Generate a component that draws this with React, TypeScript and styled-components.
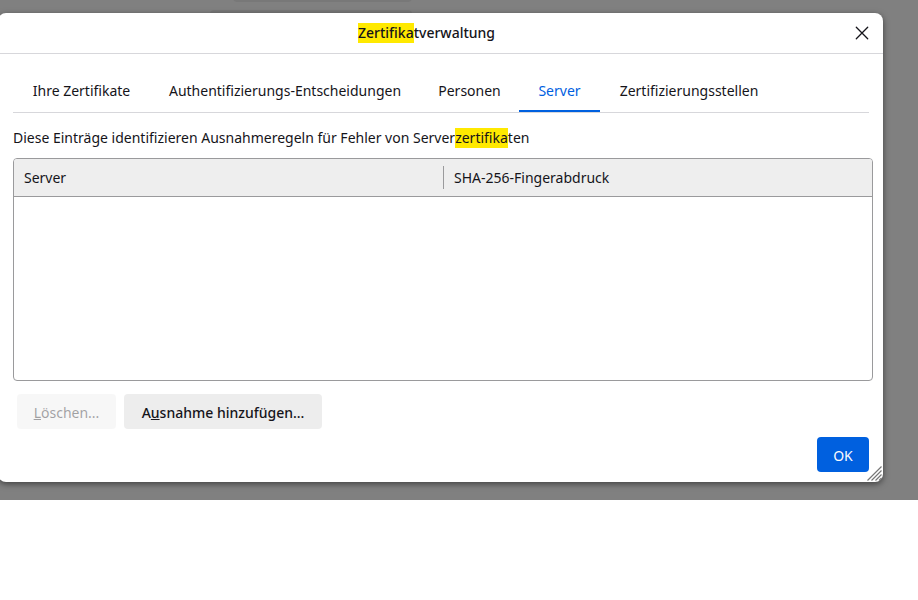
import React, { useState } from "react";
import styled, { createGlobalStyle } from "styled-components";

const GlobalStyle = createGlobalStyle`
  *, *::before, *::after { box-sizing: border-box; }
  body {
    margin: 0;
    background: #ffffff;
    color: #15141a;
    font-family: "Segoe UI", "Noto Sans", sans-serif;
    font-size: 14px;
    line-height: 20px;
  }
  button { font: inherit; color: inherit; }
`;

const Backdrop = styled.div`
  position: relative;
  padding: 13px 35px 18px 0;
  background: #808080;
  overflow: hidden;
`;

const PageShade = styled.div<{ $top: number; $left: number; $height: number }>`
  position: absolute;
  top: ${(p) => p.$top}px;
  left: ${(p) => p.$left}px;
  right: 506px;
  height: ${(p) => p.$height}px;
  border-radius: 4px;
  background: #787878;
`;

const Dialog = styled.section`
  position: relative;
  margin-left: -2px;
  border-radius: 8px;
  background: #ffffff;
  box-shadow: 0 2px 6px rgba(0, 0, 0, 0.5);
`;

const TitleBar = styled.header`
  display: grid;
  grid-template-columns: 14px 1fr 42px;
  align-items: center;
  height: 41px;
  border-bottom: 1px solid #d7d7db;
`;

const Title = styled.h1`
  grid-column: 2;
  margin: 0;
  font-size: 14px;
  font-weight: 500;
  line-height: 20px;
  text-align: center;
`;

const Highlight = styled.mark`
  display: inline-block;
  height: 20px;
  background: #ffe900;
  color: inherit;
`;

const CloseButton = styled.button`
  display: grid;
  place-items: center;
  height: 40px;
  padding: 0;
  border: 0;
  background: none;
`;

const Content = styled.div`
  padding: 16px 10px 10px 15px;
`;

const TabList = styled.div`
  display: grid;
  grid-template-columns: 137px 270px 99px 81px 178px;
  margin-right: 4px;
  border-bottom: 1px solid #d7d7db;
`;

const Tab = styled.button<{ $active: boolean }>`
  height: 42px;
  padding: 2px 0 0;
  border: 0;
  border-bottom: 2px solid ${(p) => (p.$active ? "#0060df" : "transparent")};
  background: none;
  color: ${(p) => (p.$active ? "#0060df" : "inherit")};
  white-space: nowrap;
`;

const Description = styled.p`
  margin: 15px 0 10px;
`;

const TableFrame = styled.div`
  min-height: 223px;
  border: 1px solid #9a9a9c;
  border-radius: 4px;
  overflow: hidden;
`;

const CertTable = styled.table`
  width: 100%;
  border-collapse: separate;
  border-spacing: 0;
  table-layout: fixed;
`;

const HeadCell = styled.th`
  height: 38px;
  padding: 7px 0;
  border-bottom: 1px solid #9a9a9c;
  background: #eeeeee;
  font-weight: 400;
  text-align: left;
`;

const HeadLabel = styled.span<{ $divided?: boolean }>`
  display: block;
  padding-left: 10px;
  line-height: 23px;
  border-left: ${(p) => (p.$divided ? "1px solid #9a9a9c" : "0")};
`;

const Actions = styled.div`
  display: flex;
  gap: 8px;
  padding: 13px 4px 0;
`;

const Footer = styled.footer`
  display: flex;
  justify-content: flex-end;
  padding: 8px 4px 0;
`;

const Button = styled.button<{ $primary?: boolean; $minWidth?: number }>`
  height: 35px;
  min-width: ${(p) => p.$minWidth ?? 52}px;
  padding: 2px 16px 0;
  border: 0;
  border-radius: 4px;
  background: ${(p) => (p.$primary ? "#0060df" : "#ededed")};
  color: ${(p) => (p.$primary ? "#fbfbfe" : "#15141a")};
  font-weight: ${(p) => (p.$primary ? 400 : 500)};
  &:disabled { opacity: 0.4; font-weight: 400; }
`;

const ResizeGrip = styled.svg`
  position: absolute;
  right: 1px;
  bottom: 1px;
`;

const tabs = [
  "Ihre Zertifikate",
  "Authentifizierungs-Entscheidungen",
  "Personen",
  "Server",
  "Zertifizierungsstellen",
];

export default function App() {
  const [active, setActive] = useState("Server");
  return (
    <>
      <GlobalStyle />
      <Backdrop>
        <PageShade $top={-8} $left={233} $height={10} />
        <PageShade $top={10} $left={210} $height={10} />
        <Dialog role="dialog" aria-labelledby="dialog-title">
          <TitleBar>
            <Title id="dialog-title">
              <Highlight>Zertifika</Highlight>tverwaltung
            </Title>
            <CloseButton type="button" aria-label="Schließen">
              <svg width="14" height="14" viewBox="0 0 14 14" fill="none" stroke="#15141a" strokeWidth="1.3" strokeLinecap="round">
                <path d="M1.3 1.3 12.7 12.7M12.7 1.3 1.3 12.7" />
              </svg>
            </CloseButton>
          </TitleBar>
          <Content>
            <TabList role="tablist">
              {tabs.map((name) => (
                <Tab
                  key={name}
                  type="button"
                  role="tab"
                  aria-selected={active === name}
                  $active={active === name}
                  onClick={() => setActive(name)}
                >
                  {name}
                </Tab>
              ))}
            </TabList>
            <Description>
              Diese Einträge identifizieren Ausnahmeregeln für Fehler von Server
              <Highlight>zertifika</Highlight>ten
            </Description>
            <TableFrame>
              <CertTable>
                <thead>
                  <tr>
                    <HeadCell scope="col"><HeadLabel>Server</HeadLabel></HeadCell>
                    <HeadCell scope="col"><HeadLabel $divided>SHA-256-Fingerabdruck</HeadLabel></HeadCell>
                  </tr>
                </thead>
              </CertTable>
            </TableFrame>
            <Actions>
              <Button type="button" disabled $minWidth={99}><u>L</u>öschen...</Button>
              <Button type="button" $minWidth={198}>A<u>u</u>snahme hinzufügen...</Button>
            </Actions>
            <Footer>
              <Button type="button" $primary>OK</Button>
            </Footer>
          </Content>
          <ResizeGrip width="15" height="15" viewBox="0 0 15 15" fill="none" stroke="#777777" strokeWidth="1.2" aria-hidden="true">
            <path d="M0.5 14.5 14.5 0.5M4.5 14.5 14.5 4.5M8.5 14.5 14.5 8.5M12 14.5 14.5 12" />
          </ResizeGrip>
        </Dialog>
      </Backdrop>
    </>
  );
}
